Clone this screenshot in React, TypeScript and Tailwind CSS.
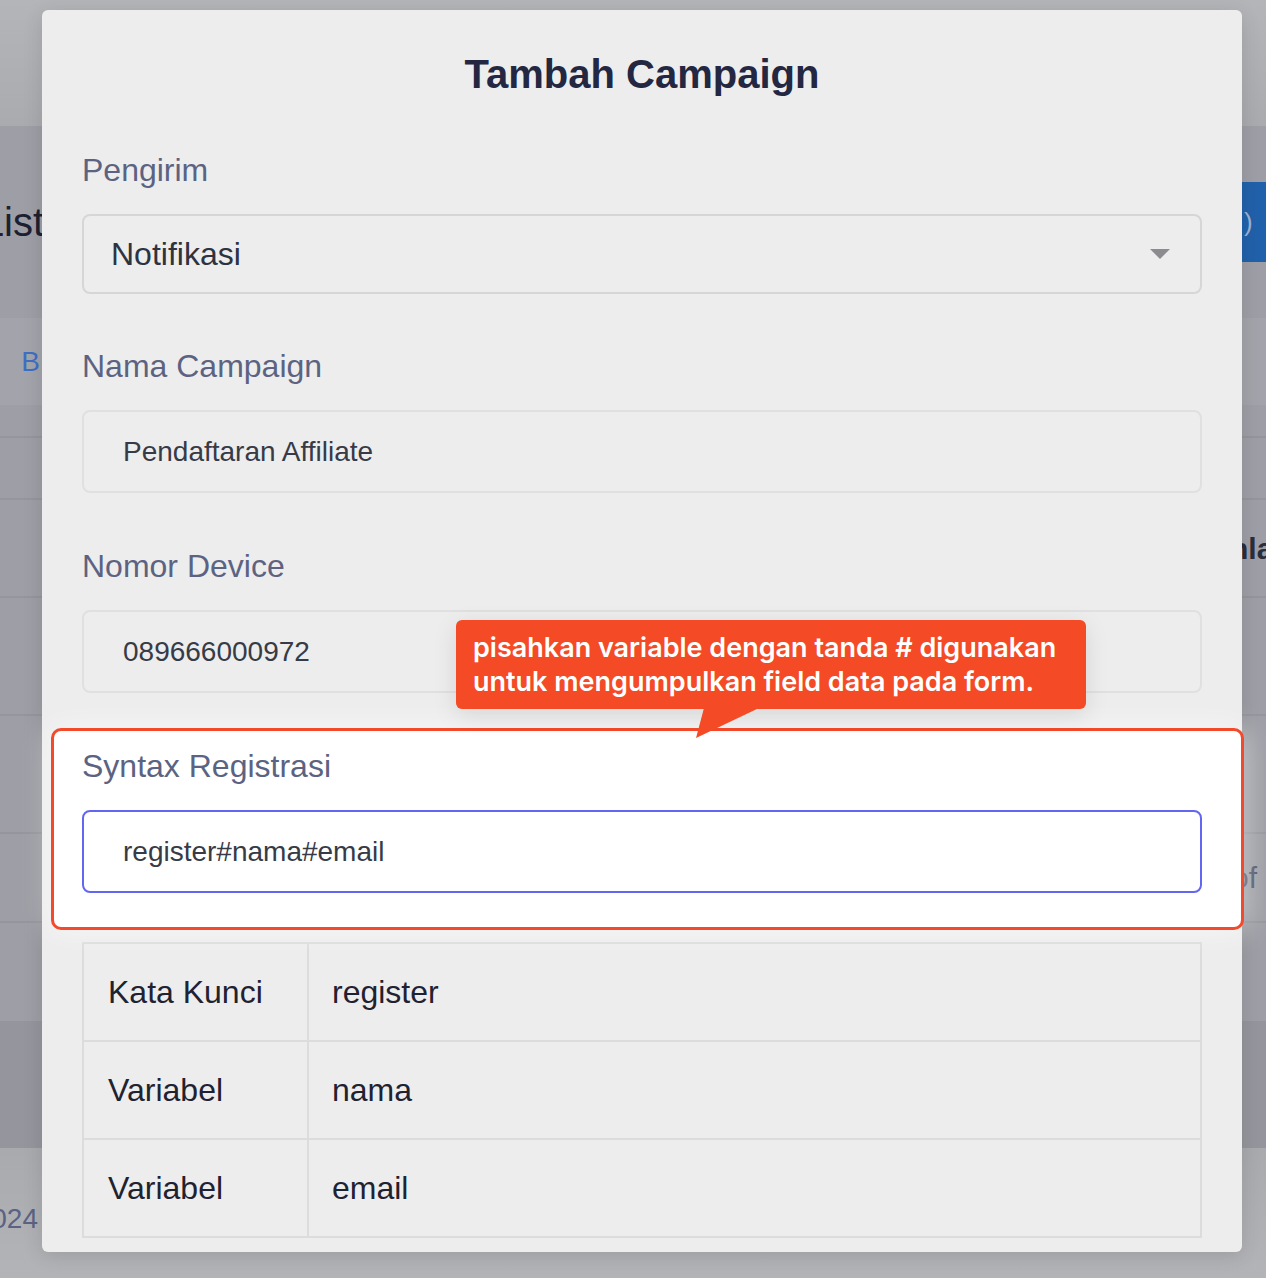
import React from 'react';

const rows = [
  { key: 'Kata Kunci', value: 'register' },
  { key: 'Variabel', value: 'nama' },
  { key: 'Variabel', value: 'email' },
];

const Label = ({ children }: { children: React.ReactNode }) => (
  <div className="h-[40px] text-[32px] leading-[40px] text-[#5c6382]">{children}</div>
);

const TextInput = ({ value, active }: { value: string; active?: boolean }) => (
  <div
    className={`mt-[24px] h-[83px] rounded-[8px] border-2 px-[39px] flex items-center text-[28px] text-[#363b47] ${
      active ? 'border-[#6366f1] bg-white' : 'border-[#e0e0e0] bg-[#ededed]'
    }`}
  >
    {value}
  </div>
);

export default function App() {
  return (
    <div className="relative w-[1266px] h-[1278px] overflow-hidden bg-[#aeafb3] font-['Liberation_Sans',Arial,sans-serif]">
      {/* page behind the modal */}
      <div className="h-[126px] bg-gradient-to-b from-[#b4b5b8] to-[#aaabaf]" />
      <div className="h-[1022px] bg-[#9e9fa6] flex flex-col">
        <div className="h-[192px] flex items-center justify-between">
          <div className="w-[44px] overflow-hidden flex justify-end">
            <span className="whitespace-nowrap text-[40px] font-normal text-[#1d2030]">Campaign List</span>
          </div>
          <div className="h-[80px] w-[24px] bg-[#2161ab] flex items-center pl-[2px] text-[26px] text-[#9fb3d4]">)</div>
        </div>
        <div className="h-[87px] bg-[#a3a4ab] flex items-center justify-between">
          <div className="w-[42px] overflow-hidden flex justify-end pr-[2px]">
            <span className="text-[28px] text-[#3e6fc4]">B</span>
          </div>
        </div>
        <div className="h-[33px] border-b-2 border-[#95969d]" />
        <div className="h-[62px] border-b-2 border-[#95969d]" />
        <div className="h-[98px] border-b-2 border-[#95969d] flex items-center justify-end">
          <div className="w-[26px] overflow-hidden flex justify-start">
            <span className="whitespace-nowrap text-[30px] font-bold text-[#2a2d3a] -ml-[10px]">nlah</span>
          </div>
        </div>
        <div className="h-[118px] border-b-2 border-[#95969d]" />
        <div className="h-[118px] border-b-2 border-[#95969d]" />
        <div className="h-[89px] border-b-2 border-[#95969d] flex items-center justify-end">
          <div className="w-[26px] overflow-hidden flex justify-start">
            <span className="whitespace-nowrap text-[30px] text-[#4d5268] -ml-[8px]">of</span>
          </div>
        </div>
        <div className="h-[100px] border-b-2 border-[#95969d]" />
        <div className="flex-1 bg-[#95969d]" />
      </div>
      <div className="h-[130px] bg-gradient-to-b from-[#a9aaae] to-[#b3b4b7] flex items-center pt-[12px]">
        <div className="w-[38px] overflow-hidden flex justify-end">
          <span className="whitespace-nowrap text-[28px] text-[#5b6284]">© 2024</span>
        </div>
      </div>

      {/* modal */}
      <div className="absolute left-[42px] top-[10px] w-[1200px] h-[1242px] rounded-[6px] bg-[#ededed] shadow-[0_4px_20px_rgba(0,0,0,0.12)] px-[40px] pt-[40px]">
        <h2 className="h-[48px] leading-[48px] text-center text-[40px] font-bold text-[#232741]">Tambah Campaign</h2>

        <div className="mt-[52px]">
          <Label>Pengirim</Label>
          <div className="mt-[24px] h-[80px] rounded-[8px] border-2 border-[#d6d6d6] flex items-center justify-between pl-[27px] pr-[30px]">
            <span className="text-[32px] text-[#2d3340]">Notifikasi</span>
            <svg width="20" height="10" viewBox="0 0 20 10">
              <path d="M0 0 L20 0 L10 10 Z" fill="#8b8b90" />
            </svg>
          </div>
        </div>

        <div className="mt-[52px]">
          <Label>Nama Campaign</Label>
          <TextInput value="Pendaftaran Affiliate" />
        </div>

        <div className="mt-[53px]">
          <Label>Nomor Device</Label>
          <TextInput value="089666000972" />
        </div>

        <div className="mt-[53px] relative isolate">
          <div className="absolute -z-10 left-[-31px] right-[-42px] top-[-18px] bottom-[-37px] rounded-[10px] border-[3px] border-[#f4492a] bg-white shadow-[0_0_30px_rgba(255,255,255,0.6)]" />
          <Label>Syntax Registrasi</Label>
          <TextInput value="register#nama#email" active />

          {/* tooltip */}
          <div className="absolute left-[374px] top-[-126px] w-[630px] h-[89px] rounded-[6px] bg-[#f44a25] px-[17px] pt-[11px] shadow-[0_6px_24px_rgba(0,0,0,0.10)] font-['Inter',sans-serif] text-[27px] font-semibold leading-[34px] text-white whitespace-nowrap">
            pisahkan variable dengan tanda # digunakan
            <br />
            untuk mengumpulkan field data pada form.
          </div>
          <svg className="absolute left-[614px] top-[-38px]" width="66" height="32" viewBox="0 0 66 32">
            <path d="M8 0 L63 0 L0 30 Z" fill="#f44a25" />
          </svg>
        </div>

        <table className="mt-[49px] w-full border-collapse text-[32px] text-[#1f2230]">
          <tbody>
            {rows.map((r, i) => (
              <tr key={i} className="h-[98px]">
                <td className="w-[225px] border-2 border-[#dcdcdc] pl-[24px]">{r.key}</td>
                <td className="border-2 border-[#dcdcdc] pl-[23px]">{r.value}</td>
              </tr>
            ))}
          </tbody>
        </table>
      </div>
    </div>
  );
}
